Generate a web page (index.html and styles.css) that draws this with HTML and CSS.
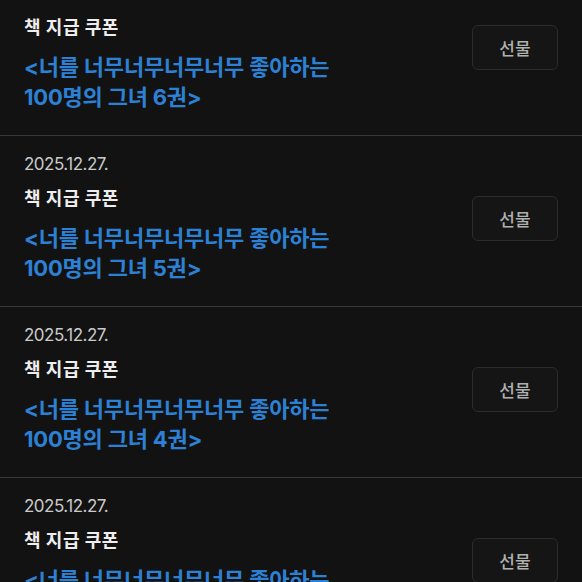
FILE: index.html
```html
<!DOCTYPE html>
<html lang="ko">
<head>
<meta charset="utf-8">
<title>쿠폰 내역</title>
<link rel="stylesheet" href="styles.css">
</head>
<body>
<ul class="coupon-list">
  <li class="coupon">
    <div class="coupon-info">
      <p class="coupon-date">2025.12.27.</p>
      <p class="coupon-title">책 지급 쿠폰</p>
      <p class="coupon-book">&lt;너를 너무너무너무너무 좋아하는<br>100명의 그녀 6권&gt;</p>
    </div>
    <button class="gift-btn" type="button">선물</button>
  </li>
  <li class="coupon">
    <div class="coupon-info">
      <p class="coupon-date">2025.12.27.</p>
      <p class="coupon-title">책 지급 쿠폰</p>
      <p class="coupon-book">&lt;너를 너무너무너무너무 좋아하는<br>100명의 그녀 5권&gt;</p>
    </div>
    <button class="gift-btn" type="button">선물</button>
  </li>
  <li class="coupon">
    <div class="coupon-info">
      <p class="coupon-date">2025.12.27.</p>
      <p class="coupon-title">책 지급 쿠폰</p>
      <p class="coupon-book">&lt;너를 너무너무너무너무 좋아하는<br>100명의 그녀 4권&gt;</p>
    </div>
    <button class="gift-btn" type="button">선물</button>
  </li>
  <li class="coupon">
    <div class="coupon-info">
      <p class="coupon-date">2025.12.27.</p>
      <p class="coupon-title">책 지급 쿠폰</p>
      <p class="coupon-book">&lt;너를 너무너무너무너무 좋아하는<br>100명의 그녀 3권&gt;</p>
    </div>
    <button class="gift-btn" type="button">선물</button>
  </li>
</ul>
</body>
</html>
```

FILE: styles.css
```css
html, body {
  margin: 0;
  padding: 0;
  background: #121212;
  height: 100%;
  overflow: hidden;
}

body {
  font-family: "Inter", "Noto Sans CJK KR", "Noto Sans", sans-serif;
  color: #ececec;
}

/* the list is scrolled so the first coupon sits partly above the top */
.coupon-list {
  list-style: none;
  margin: -35px 0 0;
  padding: 0;
}

.coupon {
  display: flex;
  align-items: center;
  justify-content: space-between;
  padding: 17px 24px 23px;
  border-bottom: 1px solid #383838;
}

.coupon-info p {
  margin: 0;
}

.coupon-date {
  font-size: 17px;
  line-height: 22px;
  color: #cacaca;
  letter-spacing: -0.5px;
}

.coupon-title {
  margin-top: 11px !important;
  font-size: 18px;
  line-height: 26px;
  font-weight: 700;
  color: #eeeeee;
  letter-spacing: 0.5px;
}

.coupon-book {
  margin-top: 11px !important;
  font-size: 22px;
  line-height: 30px;
  font-weight: 700;
  color: #2d81d5;
  letter-spacing: -0.2px;
}

.gift-btn {
  width: 86px;
  height: 45px;
  margin-top: 1px;
  border: 1px solid #2c2c2c;
  border-radius: 6px;
  background: #151515;
  color: #b0b0b0;
  font-family: "Noto Sans CJK KR", sans-serif;
  font-size: 17px;
  font-weight: 500;
  cursor: pointer;
}
```
